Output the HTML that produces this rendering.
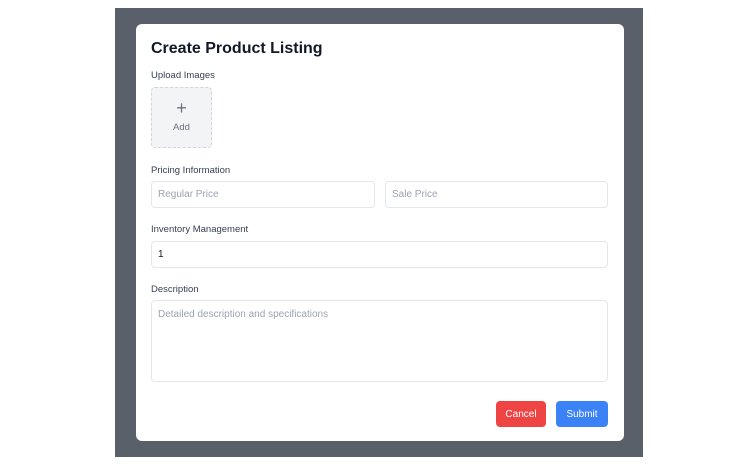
<!DOCTYPE html>
<html><head><style>
*{box-sizing:border-box;margin:0;padding:0}
body{width:750px;height:469px;background:#fff;font-family:"Liberation Sans",sans-serif;position:relative;overflow:hidden}
.ov{position:absolute;left:115px;top:8px;width:528px;height:449px;background:#59606a}
.card{position:absolute;left:136px;top:24px;width:488px;height:417px;background:#fff;border-radius:6px}
.a{position:absolute}
h1{position:absolute;left:15px;top:16px;font-size:16px;font-weight:600;color:#111827}
.lbl{position:absolute;left:15px;font-size:9.5px;color:#374151}
.in{position:absolute;border:1px solid #e5e7eb;border-radius:4px;font-size:10px;color:#9ca3af;padding-left:6px;display:flex;align-items:center}
.btn{position:absolute;top:377px;height:26px;border-radius:4px;color:#fff;font-size:10px;display:flex;align-items:center;justify-content:center}
</style></head><body>
<div class="ov"></div>
<div class="card">
<h1>Create Product Listing</h1>
<div class="lbl" style="top:46px">Upload Images</div>
<div class="a" style="left:15px;top:63px;width:61px;height:61px;background:#f3f4f6;border:1px dashed #d1d5db;border-radius:4px;text-align:center;color:#6b7280">
<div style="font-size:18px;line-height:18px;margin-top:11px">+</div>
<div style="font-size:9.5px;margin-top:5px">Add</div></div>
<div class="lbl" style="top:141px">Pricing Information</div>
<div class="in" style="left:15px;top:157px;width:224px;height:27px">Regular Price</div>
<div class="in" style="left:249px;top:157px;width:223px;height:27px">Sale Price</div>
<div class="lbl" style="top:200px">Inventory Management</div>
<div class="in" style="left:15px;top:217px;width:457px;height:27px;color:#111827">1</div>
<div class="lbl" style="top:260px">Description</div>
<div class="in" style="left:15px;top:276px;width:457px;height:82px;align-items:flex-start;padding-top:8px">Detailed description and specifications</div>
<div class="btn" style="left:360px;width:50px;background:#ef4444">Cancel</div>
<div class="btn" style="left:420px;width:52px;background:#3b82f6">Submit</div>
</div>
</body></html>
